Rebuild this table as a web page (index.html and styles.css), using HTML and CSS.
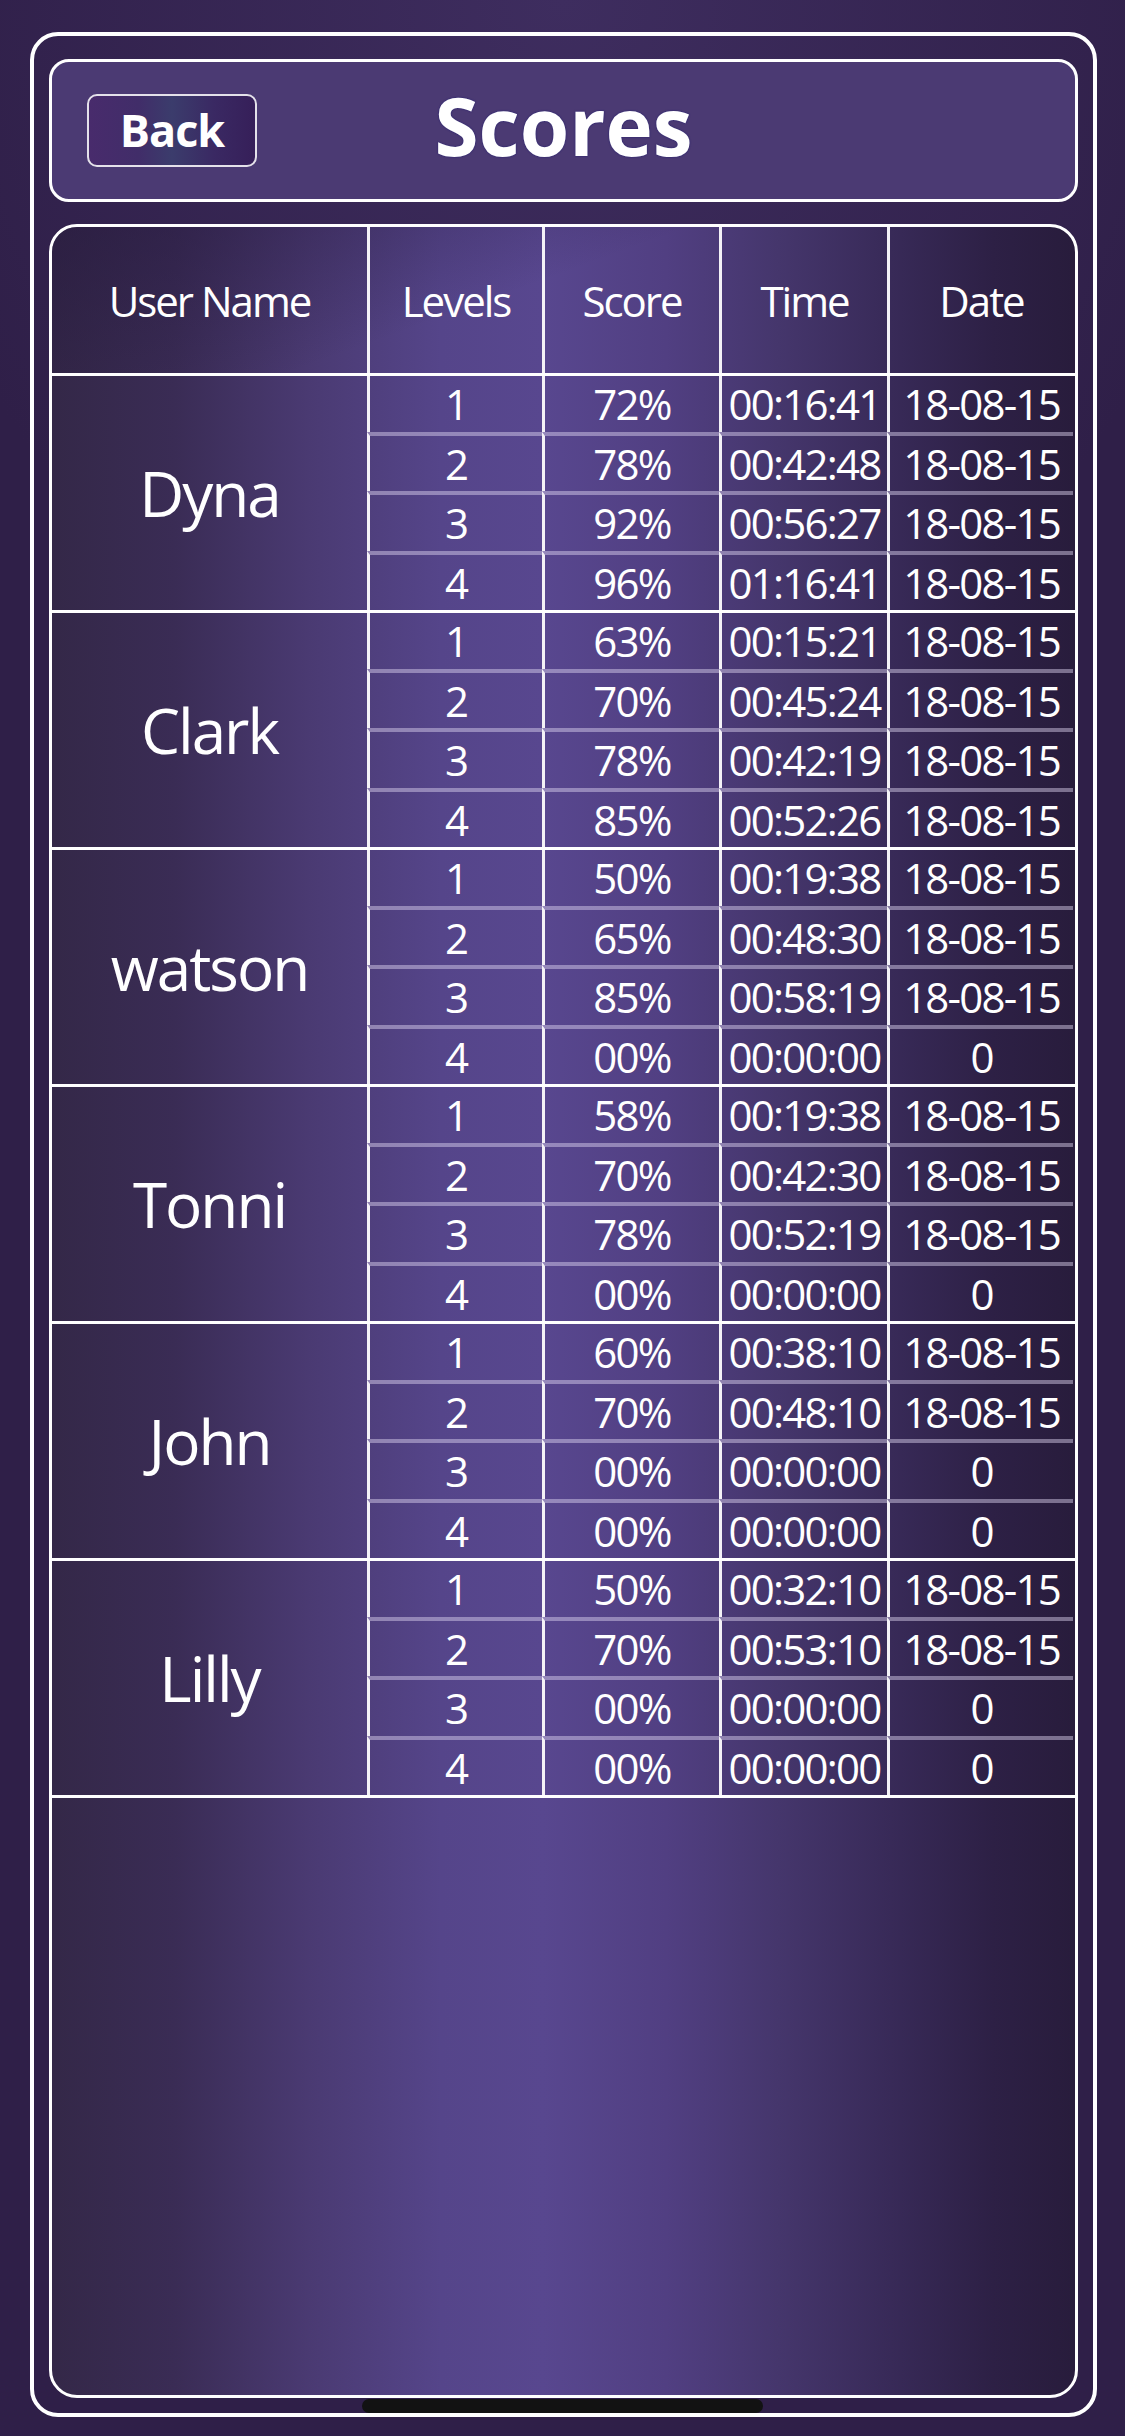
FILE: index.html
```html
<!DOCTYPE html>
<html lang="en">
<head>
    <meta charset="UTF-8">
    <meta name="viewport" content="width=device-width, initial-scale=1.0">
    <title>Scores</title>
    <link rel="stylesheet" href="styles.css">
</head>
<body>

<div class="screen">
    <div class="frame">
        <header class="topbar">
            <button class="back">Back</button>
            <h1>Scores</h1>
        </header>

        <div class="board">
            <div class="head">
                <div class="c">User Name</div>
                <div class="c">Levels</div>
                <div class="c">Score</div>
                <div class="c">Time</div>
                <div class="c">Date</div>
            </div>

            <div class="group">
                <div class="name">Dyna</div>
                <div class="c">1</div><div class="c">72%</div><div class="c">00:16:41</div><div class="c">18-08-15</div>
                <div class="c">2</div><div class="c">78%</div><div class="c">00:42:48</div><div class="c">18-08-15</div>
                <div class="c">3</div><div class="c">92%</div><div class="c">00:56:27</div><div class="c">18-08-15</div>
                <div class="c">4</div><div class="c">96%</div><div class="c">01:16:41</div><div class="c">18-08-15</div>
            </div>

            <div class="group">
                <div class="name">Clark</div>
                <div class="c">1</div><div class="c">63%</div><div class="c">00:15:21</div><div class="c">18-08-15</div>
                <div class="c">2</div><div class="c">70%</div><div class="c">00:45:24</div><div class="c">18-08-15</div>
                <div class="c">3</div><div class="c">78%</div><div class="c">00:42:19</div><div class="c">18-08-15</div>
                <div class="c">4</div><div class="c">85%</div><div class="c">00:52:26</div><div class="c">18-08-15</div>
            </div>

            <div class="group">
                <div class="name">watson</div>
                <div class="c">1</div><div class="c">50%</div><div class="c">00:19:38</div><div class="c">18-08-15</div>
                <div class="c">2</div><div class="c">65%</div><div class="c">00:48:30</div><div class="c">18-08-15</div>
                <div class="c">3</div><div class="c">85%</div><div class="c">00:58:19</div><div class="c">18-08-15</div>
                <div class="c">4</div><div class="c">00%</div><div class="c">00:00:00</div><div class="c">0</div>
            </div>

            <div class="group">
                <div class="name">Tonni</div>
                <div class="c">1</div><div class="c">58%</div><div class="c">00:19:38</div><div class="c">18-08-15</div>
                <div class="c">2</div><div class="c">70%</div><div class="c">00:42:30</div><div class="c">18-08-15</div>
                <div class="c">3</div><div class="c">78%</div><div class="c">00:52:19</div><div class="c">18-08-15</div>
                <div class="c">4</div><div class="c">00%</div><div class="c">00:00:00</div><div class="c">0</div>
            </div>

            <div class="group">
                <div class="name">John</div>
                <div class="c">1</div><div class="c">60%</div><div class="c">00:38:10</div><div class="c">18-08-15</div>
                <div class="c">2</div><div class="c">70%</div><div class="c">00:48:10</div><div class="c">18-08-15</div>
                <div class="c">3</div><div class="c">00%</div><div class="c">00:00:00</div><div class="c">0</div>
                <div class="c">4</div><div class="c">00%</div><div class="c">00:00:00</div><div class="c">0</div>
            </div>

            <div class="group">
                <div class="name">Lilly</div>
                <div class="c">1</div><div class="c">50%</div><div class="c">00:32:10</div><div class="c">18-08-15</div>
                <div class="c">2</div><div class="c">70%</div><div class="c">00:53:10</div><div class="c">18-08-15</div>
                <div class="c">3</div><div class="c">00%</div><div class="c">00:00:00</div><div class="c">0</div>
                <div class="c">4</div><div class="c">00%</div><div class="c">00:00:00</div><div class="c">0</div>
            </div>
        </div>
    </div>

    <div class="home-bar"></div>
</div>

</body>
</html>
```

FILE: styles.css
```css
body {
    margin: 0;
    background: #2f1f48;
    font-family: "Open Sans", "Noto Sans", sans-serif;
    color: #fff;
}
.screen {
    position: relative;
    width: 1125px;
    height: 2436px;
    box-sizing: border-box;
    padding: 32px 28px 19px 30px;
    display: flex;
    background: radial-gradient(ellipse 60% 30% at 50% 0%, #3e2d5f 0%, #2f1f48 100%);
}
.frame {
    flex: 1;
    display: flex;
    flex-direction: column;
    gap: 22px;
    padding: 23px 15px 15px;
    border: 4.5px solid #fff;
    border-radius: 28px;
}

/* top bar */
.topbar {
    height: 143px;
    box-sizing: border-box;
    display: grid;
    grid-template-columns: 1fr auto 1fr;
    align-items: center;
    padding: 0 35px;
    border: 3.5px solid #fff;
    border-radius: 20px;
    background: #4b3a73;
}
.back {
    justify-self: start;
    width: 170px;
    height: 73px;
    padding: 0 0 2px;
    border: 2.5px solid #e4e1ea;
    border-radius: 10px;
    background: linear-gradient(90deg, #482b6c 0%, #412d69 30%, #3b3c6c 50%, #3a2963 75%, #361f59 100%);
    color: #fff;
    font-family: "Open Sans", sans-serif;
    font-size: 45px;
    font-weight: 700;
    letter-spacing: -1px;
    cursor: pointer;
}
.topbar h1 {
    margin: 0 0 12px;
    font-size: 80px;
    font-weight: 700;
    text-shadow: 0 0 2px #1d1a6e;
}

/* score table */
.board {
    flex: 1;
    border: 3.5px solid #fff;
    border-radius: 28px;
    overflow: hidden;
    background: linear-gradient(90deg, #342848 0%, #3a2c55 12%, #4a3a72 25%, #55458a 38%, #58478f 48%, #513f82 60%, #45366c 71%, #382a58 82%, #2d2045 92%, #281c3c 100%);
}
.head,
.group {
    display: grid;
    grid-template-columns: 315px 175px 177px 168px 186px;
    border-bottom: 3.5px solid #fff;
}
.head {
    height: 149px;
    box-sizing: border-box;
    background: linear-gradient(160deg, rgba(38, 24, 62, 0.55) 0%, rgba(38, 24, 62, 0) 45%);
}
.group {
    grid-template-rows: 55.5px repeat(3, 59.5px);
}
.c {
    display: flex;
    align-items: center;
    justify-content: center;
    box-sizing: border-box;
    border-left: 3.5px solid #f4f2f7;
    font-size: 42px;
    letter-spacing: -1.8px;
    white-space: nowrap;
}
.head .c {
    letter-spacing: -2px;
}
.head .c:first-child {
    border-left: none;
}
.group .c:nth-child(n+6) {
    border-top: 4px solid rgba(226, 218, 244, 0.45);
}
.name {
    grid-row: span 4;
    display: flex;
    align-items: center;
    justify-content: center;
    font-size: 62px;
    letter-spacing: -2px;
}

/* system home indicator */
.home-bar {
    position: absolute;
    left: 362px;
    bottom: 23px;
    width: 401px;
    height: 14px;
    border-radius: 7px;
    background: #121212;
}
```
